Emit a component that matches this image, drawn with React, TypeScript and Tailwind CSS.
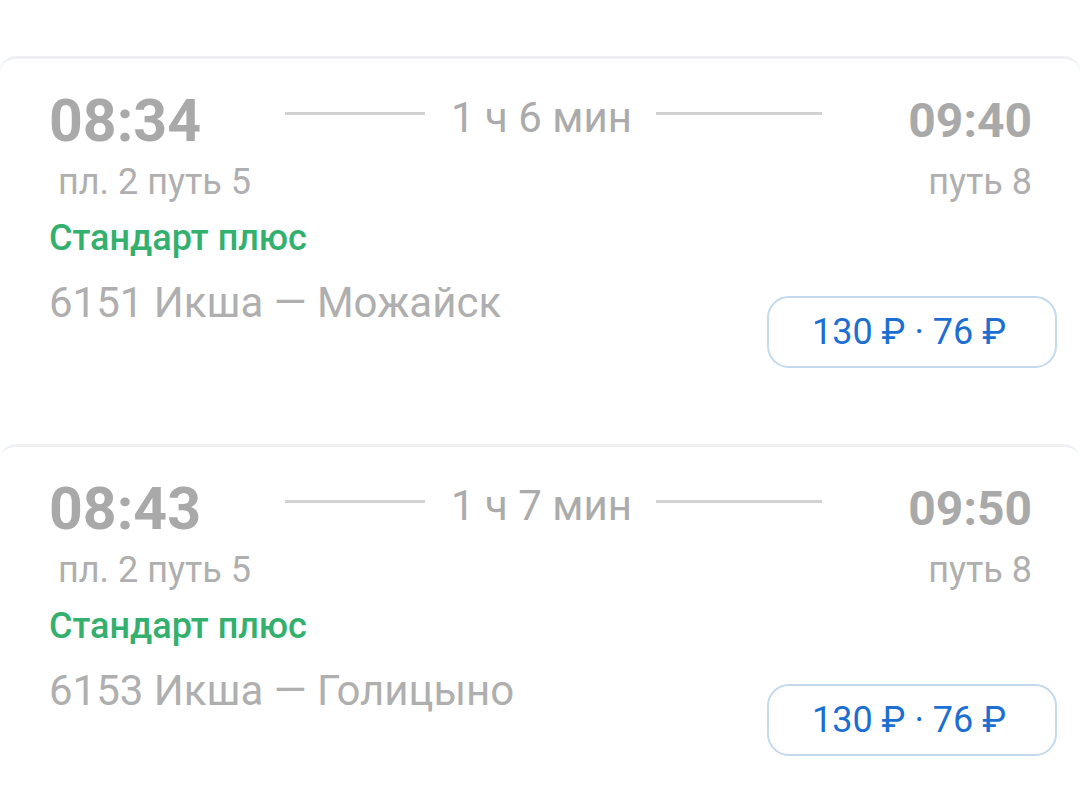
import React from "react";

type Train = {
  depart: string;
  arrive: string;
  duration: string;
  departPlatform: string;
  arrivePlatform: string;
  tariff: string;
  route: string;
  price: string;
};

const trains: Train[] = [
  {
    depart: "08:34",
    arrive: "09:40",
    duration: "1 ч 6 мин",
    departPlatform: "пл. 2 путь 5",
    arrivePlatform: "путь 8",
    tariff: "Стандарт плюс",
    route: "6151 Икша — Можайск",
    price: "130 ₽ · 76 ₽",
  },
  {
    depart: "08:43",
    arrive: "09:50",
    duration: "1 ч 7 мин",
    departPlatform: "пл. 2 путь 5",
    arrivePlatform: "путь 8",
    tariff: "Стандарт плюс",
    route: "6153 Икша — Голицыно",
    price: "130 ₽ · 76 ₽",
  },
];

const TrainCard = ({ train }: { train: Train }) => {
  return (
    <div className="h-[388px] rounded-t-[16px] border-t-[3px] border-[#eef1f4] bg-white pl-[49px] pr-[23px] pt-[32px]">
      {/* times */}
      <div className="flex items-start pr-[25px]">
        <div className="w-[236px] text-[59px] font-bold leading-none text-[#a9a9a9]">
          {train.depart}
        </div>
        <div className="mt-[21px] h-[3px] w-[140px] bg-[#d2d2d2]" />
        <div className="ml-[26px] mt-[6px] text-[42px] leading-none text-[#ababab]">
          {train.duration}
        </div>
        <div className="ml-[24px] mt-[21px] h-[3px] w-[166px] bg-[#d2d2d2]" />
        <div className="mt-[6px] flex-1 text-right text-[48px] font-bold leading-none text-[#a9a9a9]">
          {train.arrive}
        </div>
      </div>

      {/* platforms */}
      <div className="mt-[14px] flex items-start justify-between pr-[25px] text-[36px] leading-none text-[#afafaf]">
        <span className="pl-[9px]">{train.departPlatform}</span>
        <span>{train.arrivePlatform}</span>
      </div>

      <div className="mt-[20px] text-[36px] font-medium leading-none text-[#33b06e]">
        {train.tariff}
      </div>

      <div className="mt-[26px] flex items-start justify-between">
        <span className="text-[42px] leading-none text-[#afafaf]">{train.route}</span>
        <button className="mt-[14px] flex h-[72px] w-[290px] items-center justify-center rounded-[22px] border-[2.5px] border-[#c4d9f0] bg-white pb-[1px] pr-[6px] text-[36px] leading-none text-[#1c6fd1]">
          {train.price}
        </button>
      </div>
    </div>
  );
};

const App = () => {
  return (
    <div
      className="h-[812px] w-[1080px] overflow-hidden bg-white pt-[56px]"
      style={{ fontFamily: "Roboto, 'Noto Sans', sans-serif" }}
    >
      {trains.map((t) => (
        <TrainCard key={t.route} train={t} />
      ))}
    </div>
  );
};

export default App;
